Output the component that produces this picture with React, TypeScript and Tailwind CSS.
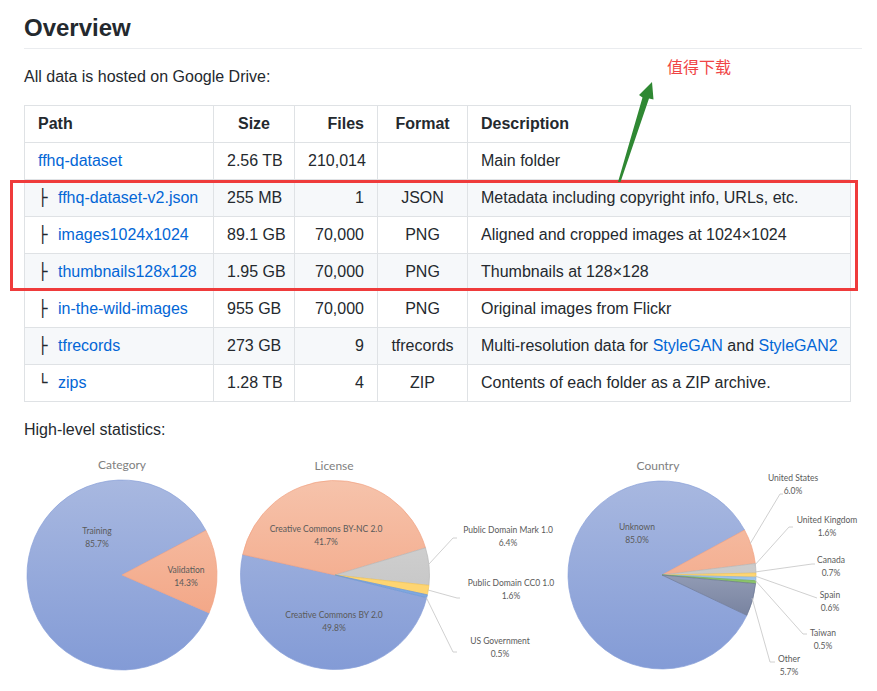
import React from 'react';

type Row = {
  prefix: string;
  name: string;
  size: string;
  files: string;
  format: string;
  desc: React.ReactNode;
};

const rows: Row[] = [
  { prefix: '', name: 'ffhq-dataset', size: '2.56 TB', files: '210,014', format: '', desc: 'Main folder' },
  { prefix: '├', name: 'ffhq-dataset-v2.json', size: '255 MB', files: '1', format: 'JSON', desc: 'Metadata including copyright info, URLs, etc.' },
  { prefix: '├', name: 'images1024x1024', size: '89.1 GB', files: '70,000', format: 'PNG', desc: 'Aligned and cropped images at 1024×1024' },
  { prefix: '├', name: 'thumbnails128x128', size: '1.95 GB', files: '70,000', format: 'PNG', desc: 'Thumbnails at 128×128' },
  { prefix: '├', name: 'in-the-wild-images', size: '955 GB', files: '70,000', format: 'PNG', desc: 'Original images from Flickr' },
  {
    prefix: '├',
    name: 'tfrecords',
    size: '273 GB',
    files: '9',
    format: 'tfrecords',
    desc: (
      <>
        Multi-resolution data for <a className="text-[#0366d6]">StyleGAN</a> and{' '}
        <a className="text-[#0366d6]">StyleGAN2</a>
      </>
    ),
  },
  { prefix: '└', name: 'zips', size: '1.28 TB', files: '4', format: 'ZIP', desc: 'Contents of each folder as a ZIP archive.' },
];

const pt = (cx: number, cy: number, r: number, a: number) => [
  cx + r * Math.cos((a * Math.PI) / 180),
  cy + r * Math.sin((a * Math.PI) / 180),
];

const slice = (cx: number, cy: number, r: number, a0: number, a1: number) => {
  const [x0, y0] = pt(cx, cy, r, a0);
  const [x1, y1] = pt(cx, cy, r, a1);
  const large = a1 - a0 > 180 ? 1 : 0;
  return `M${cx},${cy} L${x0},${y0} A${r},${r} 0 ${large} 1 ${x1},${y1} Z`;
};

type Slice = { a0: number; a1: number; fill: string; stroke: string };

const Pie = ({ cx, cy, r, slices }: { cx: number; cy: number; r: number; slices: Slice[] }) => (
  <g>
    {slices.map((s, i) => (
      <path key={i} d={slice(cx, cy, r, s.a0, s.a1)} fill={s.fill} stroke={s.stroke} strokeWidth={0.7} />
    ))}
  </g>
);

const Label = ({ x, y, a, b }: { x: number; y: number; a: string; b: string }) => (
  <g>
    <text x={x} y={y} textAnchor="middle">{a}</text>
    <text x={x} y={y + 12.5} textAnchor="middle">{b}</text>
  </g>
);

const BLUE = 'url(#gBlue)';
const ORANGE = 'url(#gOrange)';
const GRAY = 'url(#gGray)';
const bs = '#8aa1d8';
const os = '#f0a283';

const Charts = () => (
  <svg width={877} height={234} className="block -ml-6" viewBox="0 457 877 234">
    <defs>
      <linearGradient id="gBlue" gradientUnits="userSpaceOnUse" x1="0" y1="479" x2="0" y2="669">
        <stop offset="0" stopColor="#a8b8e0" />
        <stop offset="1" stopColor="#839bd6" />
      </linearGradient>
      <linearGradient id="gOrange" gradientUnits="userSpaceOnUse" x1="0" y1="479" x2="0" y2="669">
        <stop offset="0" stopColor="#f6c3ab" />
        <stop offset="1" stopColor="#f29c79" />
      </linearGradient>
      <linearGradient id="gGray" gradientUnits="userSpaceOnUse" x1="0" y1="479" x2="0" y2="669">
        <stop offset="0" stopColor="#d8d8d8" />
        <stop offset="1" stopColor="#bcbcbc" />
      </linearGradient>
      <linearGradient id="gSlate" gradientUnits="userSpaceOnUse" x1="0" y1="560" x2="0" y2="620">
        <stop offset="0" stopColor="#9aa3bb" />
        <stop offset="1" stopColor="#75809d" />
      </linearGradient>
    </defs>

    <g fontFamily="Lato, 'Liberation Sans', sans-serif">
      {/* Category */}
      <text x={122} y={468} textAnchor="middle" fontSize={12} fill="#808080">Category</text>
      <Pie
        cx={122}
        cy={574}
        r={95}
        slices={[
          { a0: 23.5, a1: 332, fill: BLUE, stroke: bs },
          { a0: -28, a1: 23.5, fill: ORANGE, stroke: os },
        ]}
      />
      <g fontSize={8.5} fill="#5a5a5a">
        <Label x={97} y={533} a="Training" b="85.7%" />
        <Label x={186} y={572} a="Validation" b="14.3%" />
      </g>

      {/* License */}
      <text x={334} y={469} textAnchor="middle" fontSize={12} fill="#808080">License</text>
      <Pie
        cx={335}
        cy={574}
        r={94.5}
        slices={[
          { a0: 13.9, a1: 192.5, fill: BLUE, stroke: bs },
          { a0: 192.5, a1: 343.3, fill: ORANGE, stroke: os },
          { a0: -16.7, a1: 6.3, fill: GRAY, stroke: '#b8b8b8' },
          { a0: 6.3, a1: 12.1, fill: '#fed572', stroke: '#f2c55a' },
          { a0: 12.1, a1: 13.9, fill: '#7fa8e0', stroke: '#6f98d4' },
        ]}
      />
      <g fill="none" stroke="#c4c4c4" strokeWidth={0.8}>
        <polyline points="429,563 453,537 457,537" />
        <polyline points="428,589 457,597 460,597" />
        <polyline points="426,596 453,651 457,651" />
      </g>
      <g fontSize={8.5} fill="#5a5a5a">
        <Label x={326} y={531} a="Creative Commons BY-NC 2.0" b="41.7%" />
        <Label x={334} y={617} a="Creative Commons BY 2.0" b="49.8%" />
        <Label x={508} y={532} a="Public Domain Mark 1.0" b="6.4%" />
        <Label x={511} y={585} a="Public Domain CC0 1.0" b="1.6%" />
        <Label x={500} y={643} a="US Government" b="0.5%" />
      </g>

      {/* Country */}
      <text x={658} y={469} textAnchor="middle" fontSize={12} fill="#808080">Country</text>
      <Pie
        cx={662}
        cy={574}
        r={94}
        slices={[
          { a0: 25.4, a1: 331.4, fill: BLUE, stroke: bs },
          { a0: -28.6, a1: -7, fill: ORANGE, stroke: os },
          { a0: -7, a1: -1.2, fill: GRAY, stroke: '#b8b8b8' },
          { a0: -1.2, a1: 1.3, fill: '#fed572', stroke: '#f2c55a' },
          { a0: 1.3, a1: 3.5, fill: '#9cc3ea', stroke: '#8ab4de' },
          { a0: 3.5, a1: 5.3, fill: '#8cc46a', stroke: '#78b255' },
          { a0: 5.3, a1: 25.4, fill: 'url(#gSlate)', stroke: '#6d7895' },
        ]}
      />
      <g fill="none" stroke="#c4c4c4" strokeWidth={0.8}>
        <polyline points="750,543 780,493 783,493" />
        <polyline points="754,565 789,526 793,526" />
        <polyline points="755,571 812,563 815,563" />
        <polyline points="755,575 817,597" />
        <polyline points="754,578 803,633 807,633" />
        <polyline points="752,597 770,661 775,661" />
      </g>
      <g fontSize={8.5} fill="#5a5a5a">
        <Label x={637} y={529} a="Unknown" b="85.0%" />
        <Label x={793} y={480} a="United States" b="6.0%" />
        <Label x={827} y={522} a="United Kingdom" b="1.6%" />
        <Label x={831} y={562} a="Canada" b="0.7%" />
        <Label x={830} y={597} a="Spain" b="0.6%" />
        <Label x={823} y={635} a="Taiwan" b="0.5%" />
        <Label x={789} y={661} a="Other" b="5.7%" />
      </g>
    </g>
  </svg>
);

const th = 'border border-[#dfe2e5] px-[13px] py-[6px] font-bold whitespace-nowrap';
const td = 'border border-[#dfe2e5] px-[13px] py-[6px] whitespace-nowrap';

export default function App() {
  return (
    <div className="relative bg-white text-[#24292e] text-base leading-6 font-['Liberation_Sans',Arial,sans-serif] px-6 pt-[13px] w-[877px] h-[691px] overflow-hidden">
      <h2 className="text-2xl leading-[30px] font-semibold pb-[5px] border-b border-[#eaecef] w-[838px]">
        Overview
      </h2>
      <p className="mt-4">All data is hosted on Google Drive:</p>

      <table className="mt-4 border-collapse table-fixed w-[826px]">
        <colgroup>
          <col className="w-[189px]" />
          <col className="w-[81px]" />
          <col className="w-[83px]" />
          <col className="w-[90px]" />
          <col className="w-[383px]" />
        </colgroup>
        <thead>
          <tr className="bg-white">
            <th className={`${th} text-left`}>Path</th>
            <th className={`${th} text-center`}>Size</th>
            <th className={`${th} text-right`}>Files</th>
            <th className={`${th} text-center`}>Format</th>
            <th className={`${th} text-left`}>Description</th>
          </tr>
        </thead>
        <tbody>
          {rows.map((r, i) => (
            <tr key={r.name} className={i % 2 === 1 ? 'bg-[#f6f8fa]' : 'bg-white'}>
              <td className={td}>
                {r.prefix && (
                  <span className="inline-block w-5 font-['DejaVu_Sans',sans-serif] text-[16px] leading-6">{r.prefix}</span>
                )}
                <a className="text-[#0366d6]">{r.name}</a>
              </td>
              <td className={`${td} text-center`}>{r.size}</td>
              <td className={`${td} text-right`}>{r.files}</td>
              <td className={`${td} text-center`}>{r.format}</td>
              <td className={td}>{r.desc}</td>
            </tr>
          ))}
        </tbody>
      </table>

      <p className="mt-4">High-level statistics:</p>
      <div className="mt-4">
        <Charts />
      </div>

      {/* annotation overlay */}
      <div className="absolute left-[10px] top-[180px] w-[848px] h-[111px] border-[3px] border-[#ef3b3b] pointer-events-none" />
      <svg className="absolute left-0 top-0 pointer-events-none" width={877} height={200}>
        <polygon points="618,182 642.5,97.5 639,95 652,82 653.5,99.5 649,98.5 620.5,182" fill="#2f8833" />
      </svg>
      <div className="absolute left-[667px] top-[58px] text-[16px] leading-4 text-[#f04545] font-['Noto_Sans_CJK_SC',sans-serif]">
        值得下载
      </div>
    </div>
  );
}
